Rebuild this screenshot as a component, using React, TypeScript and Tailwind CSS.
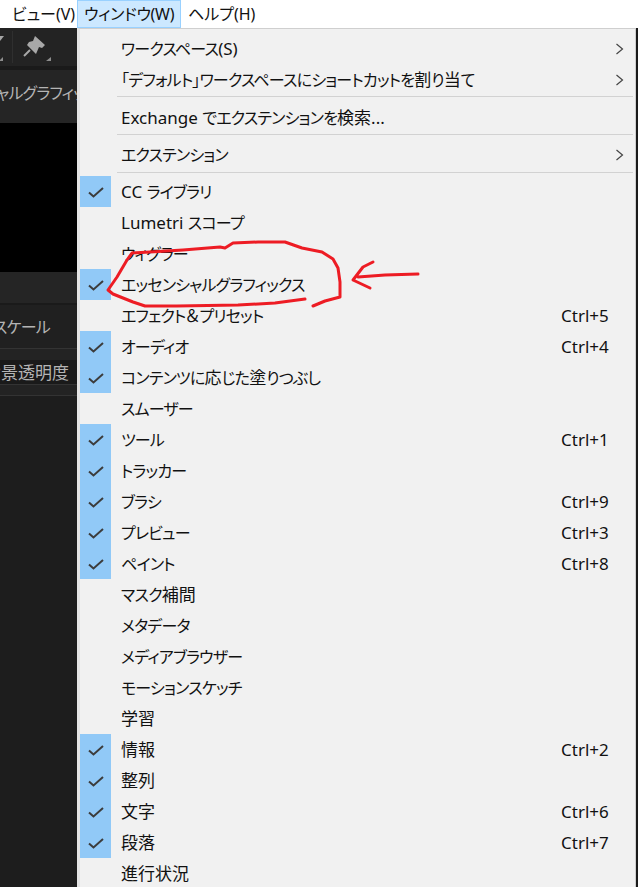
const font = "font-['Noto_Sans','Noto_Sans_CJK_JP',sans-serif]";

type Item = { label: string; checked?: boolean; shortcut?: string };

const items: Item[] = [
  { label: "CC ライブラリ", checked: true },
  { label: "Lumetri スコープ" },
  { label: "ウィグラー" },
  { label: "エッセンシャルグラフィックス", checked: true },
  { label: "エフェクト＆プリセット", shortcut: "Ctrl+5" },
  { label: "オーディオ", checked: true, shortcut: "Ctrl+4" },
  { label: "コンテンツに応じた塗りつぶし", checked: true },
  { label: "スムーザー" },
  { label: "ツール", checked: true, shortcut: "Ctrl+1" },
  { label: "トラッカー", checked: true },
  { label: "ブラシ", checked: true, shortcut: "Ctrl+9" },
  { label: "プレビュー", checked: true, shortcut: "Ctrl+3" },
  { label: "ペイント", checked: true, shortcut: "Ctrl+8" },
  { label: "マスク補間" },
  { label: "メタデータ" },
  { label: "メディアブラウザー" },
  { label: "モーションスケッチ" },
  { label: "学習" },
  { label: "情報", checked: true, shortcut: "Ctrl+2" },
  { label: "整列", checked: true },
  { label: "文字", checked: true, shortcut: "Ctrl+6" },
  { label: "段落", checked: true, shortcut: "Ctrl+7" },
  { label: "進行状況" },
];

// kana runs are narrower than kanji in the original UI font
function Label({ text }: { text: string }) {
  return (
    <>
      {text.split(/([\u3040-\u30ff「」]+)/).map((part, i) =>
        i % 2 === 1 ? (
          <span key={i} className="text-[16px] tracking-[-0.8px]">{part}</span>
        ) : (
          <span key={i}>{part}</span>
        ),
      )}
    </>
  );
}

function Chevron() {
  return (
    <svg width="9" height="12" viewBox="0 0 9 12">
      <path d="M1.5 1 L7.5 6 L1.5 11" fill="none" stroke="#444" strokeWidth="1.2" />
    </svg>
  );
}

function Row({ item, arrow }: { item: Item; arrow?: boolean }) {
  return (
    <div className="flex h-[31px] items-center">
      <div className={`flex h-[31px] w-[31px] shrink-0 items-center justify-center ${item.checked ? "bg-[#91c9f7]" : ""}`}>
        {item.checked && (
          <svg width="16" height="11" viewBox="0 0 16 11" className="mt-[2px]">
            <path d="M1 5.5 L5.5 9.5 L15 1" fill="none" stroke="#3c3c3c" strokeWidth="2" />
          </svg>
        )}
      </div>
      <div className="ml-[10px] flex-1 whitespace-nowrap"><Label text={item.label} /></div>
      {item.shortcut && <div className="w-[74px] shrink-0">{item.shortcut}</div>}
      {arrow && <div className="w-[20px] shrink-0"><Chevron /></div>}
    </div>
  );
}

function Sep({ className }: { className: string }) {
  return <div className={`ml-[37px] mr-[2px] h-[1px] bg-[#d2d2d2] ${className}`} />;
}

function LeftPanel() {
  return (
    <div className="flex w-[77px] shrink-0 flex-col overflow-hidden bg-black text-[17px] leading-none text-[#b4b4b4]">
      <div className="flex h-[38px] shrink-0 items-center bg-[#232323]">
        <svg width="12" height="34" viewBox="0 0 12 34" className="shrink-0">
          <path d="M0 6 L4 6 L0 11 Z" fill="#a6a6a6" />
          <path d="M3 27 L3 31 L0 31 L0 30 Z" fill="#8d8d8d" />
        </svg>
        <div className="h-[32px] w-[1px] shrink-0 bg-[#2f2f2f]" />
        <svg width="32" height="34" viewBox="0 0 32 34" className="ml-[9px] shrink-0">
          <path d="M13 6 L23 15 L20 18 L17 17 L14 24 L5 15 L7 12 L11 11 Z" fill="#a8a8a8" />
          <path d="M8 20 L2 26" stroke="#a8a8a8" strokeWidth="2" />
          <path d="M29 27 L29 31 L24 31 Z" fill="#8d8d8d" />
        </svg>
      </div>
      <div className="h-[4px] shrink-0 bg-[#1a1a1a]" />
      <div className="flex h-[53px] shrink-0 items-start bg-[#252525] pt-[14px]">
        <span className="ml-[-72px] whitespace-nowrap"><Label text="エッセンシャルグラフィックス" /></span>
      </div>
      <div className="h-[149px] shrink-0 bg-black" />
      <div className="h-[31px] shrink-0 bg-[#252525]" />
      <div className="h-[2px] shrink-0 bg-[#1a1a1a]" />
      <div className="flex h-[43px] shrink-0 items-center bg-[#202020]">
        <span className="ml-[-7px] whitespace-nowrap"><Label text="スケール" /></span>
      </div>
      <div className="h-[12px] shrink-0 border-t border-[#333] bg-[#232323]" />
      <div className="flex h-[24px] shrink-0 items-center bg-[#1a1a1a]">
        <span className="ml-[-16px] whitespace-nowrap">背景透明度</span>
      </div>
      <div className="h-[11px] shrink-0 border-t border-[#333] bg-[#232323]" />
      <div className="flex-1 border-t border-[#333] bg-[#1d1d1d]" />
    </div>
  );
}

export default function App() {
  return (
    <div className={`relative flex h-[887px] w-[638px] flex-col overflow-hidden bg-white text-[17px] leading-none text-[#111] [font-feature-settings:'palt'] ${font}`}>
      {/* menu bar */}
      <div className="flex h-[28px] shrink-0 items-stretch bg-white text-[16px]">
        <div className="flex w-[77px] items-center pl-[12px] whitespace-nowrap">ビュー(V)</div>
        <div className="flex w-[104px] items-center border border-[#99d1ff] bg-[#cce8ff] pl-[6px] whitespace-nowrap tracking-[-0.3px]">ウィンドウ(W)</div>
        <div className="flex items-center pl-[7px] whitespace-nowrap">ヘルプ(H)</div>
      </div>

      <div className="flex min-h-0 flex-1">
        <LeftPanel />
        {/* window menu */}
        <div className="w-[559px] shrink-0 overflow-hidden border-r border-t border-l-[3px] border-t-[#cfcfcf] border-r-[#cfcfcf] border-l-[#e4e4e4] bg-[#f1f1f1] pt-[4px]">
          <Row item={{ label: "ワークスペース(S)" }} arrow />
          <Row item={{ label: "「デフォルト」ワークスペースにショートカットを割り当て" }} arrow />
          <Sep className="mt-[1px] mb-[5px]" />
          <Row item={{ label: "Exchange でエクステンションを検索..." }} />
          <Sep className="mt-[1px] mb-[4px]" />
          <Row item={{ label: "エクステンション" }} arrow />
          <Sep className="mt-[2px] mb-[3px]" />
          {items.map((item) => (
            <Row key={item.label} item={item} />
          ))}
        </div>
        <div className="flex-1 bg-[#1a1a1a]" />
      </div>

      {/* red pen scribble */}
      <svg width="638" height="887" viewBox="0 0 638 887" className="pointer-events-none absolute left-0 top-0">
        <path
          d="M313 306 L325 301 L340 297 L340 282 L338 268 L333 259 L322 252 L302 248 L285 242 L258 242 L233 243 L225 248 L220 247 L183 250 L150 252 L132 253 L127 260 L117 277 L108 290 L113 294 L133 302 L145 306 L177 306 L238 305 L275 303 L305 299"
          fill="none"
          stroke="#ed1c24"
          strokeWidth="3"
          strokeLinejoin="round"
          strokeLinecap="round"
        />
        <path
          d="M418 274 L385 275 L358 277 M373 262 L363 267 L353 280 L370 288"
          fill="none"
          stroke="#ed1c24"
          strokeWidth="3"
          strokeLinejoin="round"
          strokeLinecap="round"
        />
      </svg>
    </div>
  );
}
